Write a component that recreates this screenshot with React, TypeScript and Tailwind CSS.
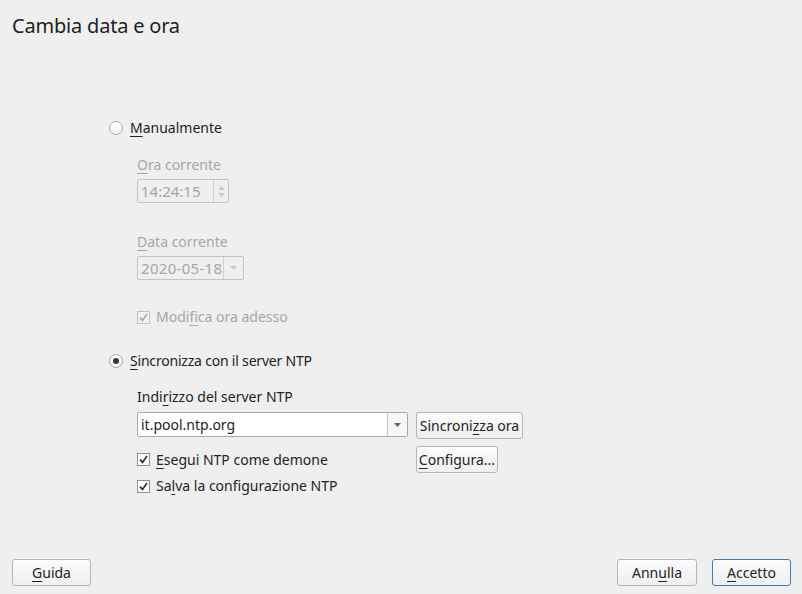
import React from 'react'

const font = { fontFamily: '"Noto Sans", "DejaVu Sans", sans-serif' }

function U({ children }: { children: React.ReactNode }) {
  return <span className="underline underline-offset-[3px] decoration-1">{children}</span>
}

function Radio({ checked }: { checked?: boolean }) {
  return (
    <span className="w-[14px] h-[14px] rounded-full border border-[#a9a9a9] bg-gradient-to-b from-white to-[#f4f4f4] flex items-center justify-center shrink-0">
      {checked && <span className="w-[6px] h-[6px] rounded-full bg-[#3a3a3a]" />}
    </span>
  )
}

function Check({ disabled }: { disabled?: boolean }) {
  return (
    <span
      className={
        'w-[13px] h-[13px] border flex items-center justify-center shrink-0 ' +
        (disabled ? 'border-[#c2c2c2] bg-[#f2f2f2]' : 'border-[#8f8f8f] bg-white')
      }
    >
      <svg width="9" height="9" viewBox="0 0 9 9">
        <path
          d="M1 4.6 L3.5 7.4 L8 1"
          fill="none"
          stroke={disabled ? '#a8a8a8' : '#2a2a2a'}
          strokeWidth="1.6"
        />
      </svg>
    </span>
  )
}

function Button({ children, w, primary }: { children: React.ReactNode; w: string; primary?: boolean }) {
  return (
    <button
      className={
        'h-[27px] rounded-[3px] border bg-gradient-to-b from-[#fcfcfc] to-[#efefef] text-[14px] text-[#232323] flex items-center justify-center ' +
        w +
        (primary ? ' border-[#3d7cb8]' : ' border-[#b5b5b5]')
      }
    >
      {children}
    </button>
  )
}

export default function App() {
  return (
    <div className="w-[802px] h-[594px] bg-[#efefef] flex flex-col text-[14px] text-[#232323]" style={font}>
      <div className="pl-[12px] pt-[12px] text-[20px] leading-[28px] text-[#1e1e1e] tracking-[-0.2px]">Cambia data e ora</div>

      <div className="mt-[78px] pl-[109px]">
        {/* manual */}
        <div className="h-[20px] flex items-center gap-[7px]">
          <Radio />
          <span className="leading-[20px]">
            <U>M</U>anualmente
          </span>
        </div>

        <div className="pl-[28px] text-[#a6a6a6]">
          <div className="mt-[17px] h-[20px] leading-[20px]">
            <U>O</U>ra corrente
          </div>
          <div className="mt-[4px] w-[92px] h-[24px] border border-[#c4c4c4] rounded-[2px] flex">
            <div className="flex-1 pl-[3px] leading-[22px] text-[15px]">14:24:15</div>
            <div className="w-[15px] border-l border-[#d0d0d0] flex flex-col items-center justify-center gap-[3px]">
              <svg width="7" height="4" viewBox="0 0 7 4"><path d="M0 4 L3.5 0 L7 4 Z" fill="#c8c8c8" /></svg>
              <svg width="7" height="4" viewBox="0 0 7 4"><path d="M0 0 L3.5 4 L7 0 Z" fill="#c8c8c8" /></svg>
            </div>
          </div>

          <div className="mt-[29px] h-[20px] leading-[20px]">
            <U>D</U>ata corrente
          </div>
          <div className="mt-[4px] w-[107px] h-[24px] border border-[#c4c4c4] rounded-[2px] flex">
            <div className="flex-1 pl-[3px] leading-[22px] text-[15px] tracking-[0.3px]">2020-05-18</div>
            <div className="w-[20px] border-l border-[#d0d0d0] flex items-center justify-center">
              <svg width="7" height="4" viewBox="0 0 7 4"><path d="M0 0 L3.5 4 L7 0 Z" fill="#c8c8c8" /></svg>
            </div>
          </div>

          <div className="mt-[27px] h-[20px] flex items-center gap-[6px]">
            <Check disabled />
            <span className="leading-[20px]">
              Modi<U>f</U>ica ora adesso
            </span>
          </div>
        </div>

        {/* NTP */}
        <div className="mt-[24px] h-[20px] flex items-center gap-[7px]">
          <Radio checked />
          <span className="leading-[20px] tracking-[-0.2px]">
            <U>S</U>incronizza con il server NTP
          </span>
        </div>

        <div className="pl-[28px]">
          <div className="mt-[16px] h-[20px] leading-[20px]">
            Indi<U>r</U>izzo del server NTP
          </div>
          <div className="mt-[5px] flex gap-[8px] items-start">
            <div className="w-[271px] h-[25px] border border-[#a8a8a8] rounded-[2px] bg-white flex">
              <div className="flex-1 pl-[3px] leading-[23px]">it.pool.ntp.org</div>
              <div className="w-[20px] border-l border-[#c8c8c8] bg-[#f7f7f7] flex items-center justify-center">
                <svg width="7" height="4" viewBox="0 0 7 4"><path d="M0 0 L3.5 4 L7 0 Z" fill="#666" /></svg>
              </div>
            </div>
            <Button w="w-[107px]">
              Sincroni<U>z</U>za ora
            </Button>
          </div>

          <div className="mt-[7px] flex gap-[8px] items-center">
            <div className="w-[271px] h-[27px] flex items-center gap-[6px]">
              <Check />
              <span className="leading-[20px]">
                <U>E</U>segui NTP come demone
              </span>
            </div>
            <Button w="w-[82px]">
              <U>C</U>onfigura...
            </Button>
          </div>

          <div className="mt-[3px] h-[20px] flex items-center gap-[6px]">
            <Check />
            <span className="leading-[20px]">
              Sa<U>l</U>va la configurazione NTP
            </span>
          </div>
        </div>
      </div>

      <div className="mt-auto flex items-center pl-[12px] pr-[11px] pb-[8px]">
        <Button w="w-[79px]">
          <U>G</U>uida
        </Button>
        <div className="flex-1" />
        <Button w="w-[80px]">
          Ann<U>u</U>lla
        </Button>
        <div className="w-[15px]" />
        <Button w="w-[79px]" primary>
          <U>A</U>ccetto
        </Button>
      </div>
    </div>
  )
}
